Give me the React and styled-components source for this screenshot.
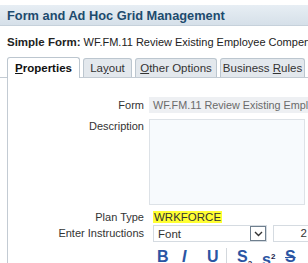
import React from "react";
import styled, { createGlobalStyle } from "styled-components";

const Global = createGlobalStyle`
  html, body { margin: 0; padding: 0; background: #fff; }
  body { font-family: "Liberation Sans", Arial, sans-serif; color: #333; overflow: hidden; }
`;

const Page = styled.div`
  width: 308px;
  height: 263px;
  overflow: hidden;
  padding-top: 5px;
  box-sizing: border-box;
`;

const Header = styled.div`
  height: 21px;
  box-sizing: border-box;
  background: linear-gradient(#e7eef4, #d6e0e9);
  border-bottom: 1px solid #c6d1db;
  display: flex;
  align-items: center;
  padding-left: 7px;
  font-weight: bold;
  font-size: 12.8px;
  color: #1d4b6e;
  white-space: nowrap;
`;

const SubTitle = styled.div`
  margin-top: 9px;
  padding-left: 7px;
  font-size: 11px;
  line-height: 14px;
  white-space: nowrap;
  color: #222;
  b { font-weight: bold; font-size: 11.5px; }
`;

const TabBar = styled.div`
  display: flex;
  align-items: flex-end;
  margin-top: 8px;
  padding-left: 7px;
  gap: 3px;
  border-bottom: 1px solid #c3cbd3;
  height: 20px;
`;

const Tab = styled.div`
  width: ${p => p.$w}px;
  flex: none;
  box-sizing: border-box;
  display: flex;
  align-items: center;
  justify-content: center;
  font-size: 11.5px;
  white-space: nowrap;
  border: 1px solid #bcc6cf;
  border-bottom: none;
  border-radius: 3px 3px 0 0;
  background: ${p => (p.$active ? "#fff" : "#e3e8ed")};
  color: ${p => (p.$active ? "#111" : "#333")};
  font-weight: ${p => (p.$active ? "bold" : "normal")};
  margin-bottom: ${p => (p.$active ? "-1px" : "0")};
  height: ${p => (p.$active ? "21px" : "19px")};
  u { text-decoration: underline; }
`;

const Panel = styled.div`
  margin-left: 7px;
  border-left: 1px solid #c3cbd3;
  padding-top: 19px;
  height: 200px;
`;

const Grid = styled.div`
  display: grid;
  grid-template-columns: 136px 1fr;
  column-gap: 5px;
  font-size: 11px;
`;

const Label = styled.div`
  text-align: right;
  color: #333;
  white-space: nowrap;
  line-height: ${p => p.$lh || "16px"};
  margin-top: ${p => p.$mt || "0"};
`;

const ReadField = styled.div`
  height: 16px;
  line-height: 16px;
  background: #eef0f3;
  color: #6a6a6a;
  padding-left: 4px;
  font-size: 10.8px;
  white-space: nowrap;
  overflow: hidden;
  margin-bottom: 6px;
`;

const TextArea = styled.div`
  height: 86px;
  width: 156px;
  box-sizing: border-box;
  border: 1px solid #dde2e7;
  background: #f7fafd;
`;

const PlanValue = styled.div`
  line-height: 12px;
  margin-top: 6px;
  padding-left: 4px;
  font-size: 11.5px;
`;

const Highlight = styled.span`
  background: #ffff33;
  color: #333;
  padding: 0 1px;
`;

const Row = styled.div`
  display: flex;
  gap: 6px;
  padding-left: 4px;
  margin-top: 2px;
`;

const Select = styled.div`
  width: 114px;
  height: 17px;
  flex: none;
  box-sizing: border-box;
  border: 1px solid #d5dbe1;
  display: flex;
  align-items: center;
  justify-content: space-between;
  padding-left: 4px;
  font-size: 11.5px;
`;

const DropBtn = styled.div`
  width: 16px;
  height: 15px;
  box-sizing: border-box;
  border: 1px solid #6f7f8e;
  display: flex;
  align-items: center;
  justify-content: center;
  background: #fff;
`;

const SizeBox = styled.div`
  width: 40px;
  height: 17px;
  flex: none;
  box-sizing: border-box;
  border: 1px solid #d5dbe1;
  text-align: right;
  padding-right: 5px;
  line-height: 15px;
  font-size: 11.5px;
`;

const Toolbar = styled.div`
  grid-column: 2;
  display: flex;
  align-items: flex-start;
  padding-left: 8px;
  margin-top: 6px;
  font-weight: bold;
  font-size: 16px;
  line-height: 18px;
  color: #2b55a3;
`;

const ToolBtn = styled.span`
  display: inline-block;
  flex: none;
  width: ${p => p.$w};
  font-style: ${p => (p.$italic ? "italic" : "normal")};
  text-decoration: ${p => p.$deco || "none"};
  sub, sup { font-size: 8px; color: #1a1a4a; }
`;

const Sep = styled.span`
  width: 1px;
  height: 18px;
  flex: none;
  background: #d3d8dd;
  margin: 0 10px 0 0;
`;

export default function App() {
  return (
    <Page>
      <Global />
      <Header>Form and Ad Hoc Grid Management</Header>
      <SubTitle><b>Simple Form:</b> WF.FM.11 Review Existing Employee Compensation</SubTitle>
      <TabBar>
        <Tab $active $w={73}><span><u>P</u>roperties</span></Tab>
        <Tab $w={49}><span>La<u>y</u>out</span></Tab>
        <Tab $w={82}><span><u>O</u>ther Options</span></Tab>
        <Tab $w={85}><span>Business <u>R</u>ules</span></Tab>
      </TabBar>
      <Panel>
        <Grid>
          <Label>Form</Label>
          <ReadField>WF.FM.11 Review Existing Employee Compensation</ReadField>
          <Label $lh="14px">Description</Label>
          <TextArea />
          <Label $lh="12px" $mt="6px">Plan Type</Label>
          <PlanValue><Highlight>WRKFORCE</Highlight></PlanValue>
          <Label $mt="2px" $lh="17px">Enter Instructions</Label>
          <Row>
            <Select>
              Font
              <DropBtn>
                <svg width="9" height="6" viewBox="0 0 9 6"><path d="M1 1 L4.5 4.5 L8 1" stroke="#333" strokeWidth="1.4" fill="none" /></svg>
              </DropBtn>
            </Select>
            <SizeBox>2</SizeBox>
          </Row>
          <Toolbar>
            <ToolBtn $w="25px">B</ToolBtn>
            <ToolBtn $w="25px" $italic>I</ToolBtn>
            <ToolBtn $w="19px" $deco="underline">U</ToolBtn>
            <Sep />
            <ToolBtn $w="25px">S<sub>2</sub></ToolBtn>
            <ToolBtn $w="23px">s<sup>2</sup></ToolBtn>
            <ToolBtn $w="20px" $deco="line-through">S</ToolBtn>
          </Toolbar>
        </Grid>
      </Panel>
    </Page>
  );
}
